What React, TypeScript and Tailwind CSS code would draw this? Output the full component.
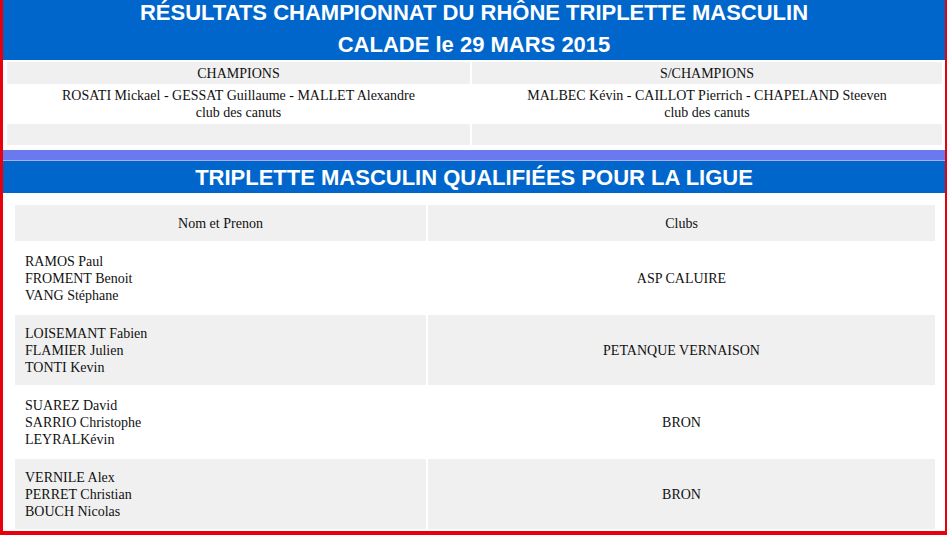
const CHAMPS = [
  { title: "CHAMPIONS", names: "ROSATI Mickael - GESSAT Guillaume - MALLET Alexandre", club: "club des canuts" },
  { title: "S/CHAMPIONS", names: "MALBEC Kévin - CAILLOT Pierrich - CHAPELAND Steeven", club: "club des canuts" },
];

const QUALIFIED = [
  { players: ["RAMOS Paul", "FROMENT Benoit", "VANG Stéphane"], club: "ASP CALUIRE" },
  { players: ["LOISEMANT Fabien", "FLAMIER Julien", "TONTI Kevin"], club: "PETANQUE VERNAISON" },
  { players: ["SUAREZ David", "SARRIO Christophe", "LEYRALKévin"], club: "BRON" },
  { players: ["VERNILE Alex", "PERRET Christian", "BOUCH Nicolas"], club: "BRON" },
];

export default function App() {
  return (
    <div className="h-[535px] w-[947px] overflow-hidden bg-white">
      <div className="flex h-full flex-col overflow-hidden border-x-[3px] border-b-[4px] border-[#e8000b] border-r-[2px] font-['Liberation_Serif'] text-[14px] leading-[17px] text-[#111]">
        {/* Title */}
        <div className="h-[60px] shrink-0 overflow-hidden bg-[#0066cc] text-center font-['Liberation_Sans'] text-[22px] font-bold leading-[32px] text-white">
          <div className="-mt-[3px]">RÉSULTATS CHAMPIONNAT DU RHÔNE TRIPLETTE MASCULIN</div>
          <div>CALADE le 29 MARS 2015</div>
        </div>

        {/* Champions table */}
        <div className="ml-[4px] mr-[3px] mt-[2px] grid grid-cols-[463px_1fr] gap-x-[2px] text-center">
          {CHAMPS.map((c) => (
            <div key={c.title} className="flex h-[22px] items-center justify-center bg-[#f0f0f0]">
              {c.title}
            </div>
          ))}
          {CHAMPS.map((c) => (
            <div key={c.names} className="flex h-[40px] flex-col items-center justify-center bg-white">
              <div>{c.names}</div>
              <div>{c.club}</div>
            </div>
          ))}
          {CHAMPS.map((c) => (
            <div key={c.title + "-empty"} className="h-[21px] bg-[#f0f0f0]" />
          ))}
        </div>

        <div className="mt-[5px] h-[10px] shrink-0 bg-[#6b79ef]" />
        <div className="h-px shrink-0 bg-[#a8b0f4]" />
        <div className="flex h-[32px] shrink-0 items-center justify-center bg-[#0066cc] font-['Liberation_Sans'] text-[22px] font-bold text-white">
          TRIPLETTE MASCULIN QUALIFIÉES POUR LA LIGUE
        </div>

        {/* Qualified table */}
        <div className="ml-[12px] mr-[10px] mt-[12px] grid grid-cols-[411px_1fr] gap-[2px]">
          <div className="flex h-[36px] items-center justify-center bg-[#f0f0f0]">Nom et Prenon</div>
          <div className="flex h-[36px] items-center justify-center bg-[#f0f0f0]">Clubs</div>
          {QUALIFIED.map((row, i) => {
            const bg = i % 2 === 0 ? "bg-white" : "bg-[#f0f0f0]";
            return [
              <div key={row.players[0]} className={`flex h-[70px] flex-col justify-center pl-[10px] ${bg}`}>
                {row.players.map((p) => (
                  <div key={p}>{p}</div>
                ))}
              </div>,
              <div key={row.players[0] + "-club"} className={`flex h-[70px] items-center justify-center ${bg}`}>
                {row.club}
              </div>,
            ];
          })}
        </div>
      </div>
    </div>
  );
}
